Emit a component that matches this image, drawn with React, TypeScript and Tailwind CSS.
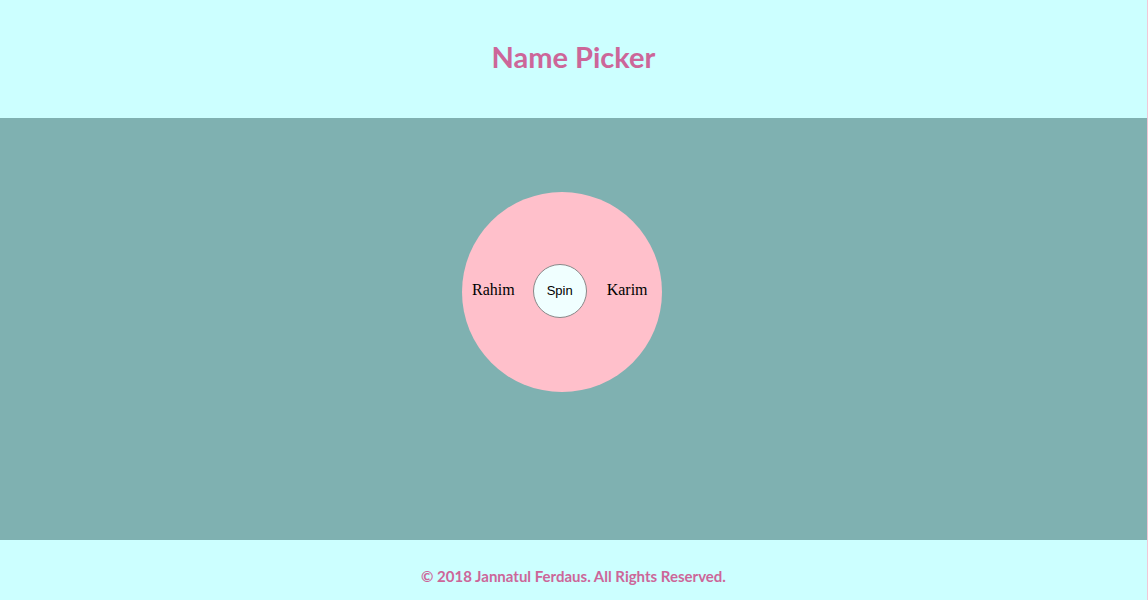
import React from 'react';

const names = ['Rahim', 'Karim'];

export default function App() {
  return (
    <div className="flex h-[600px] w-[1148px] flex-col bg-[#ccffff] border-r border-[#f2c6d6]">
      {/* Header */}
      <header className="flex h-[118px] items-center justify-center pb-[4px]">
        <h1 className="text-[29px] font-bold text-[#cc6699] [font-family:Lato,'Open_Sans',sans-serif]">Name Picker</h1>
      </header>

      {/* Wheel area */}
      <main className="h-[422px] bg-[#7fb1b1] pt-[74px] pl-[462px]">
        <div className="flex h-[200px] w-[200px] items-center rounded-full bg-[#ffc0cb] pl-[10px] pb-[2px] [font-family:'Liberation_Serif',serif]">
          <span className="mb-[2px] text-[16px] text-black">{names[0]}</span>
          <button className="ml-[18px] flex h-[54px] w-[54px] items-center justify-center rounded-full border border-[#888] bg-[#f0ffff] text-[13px] text-black [font-family:'Liberation_Sans',Arial,sans-serif]">
            Spin
          </button>
          <span className="mb-[2px] ml-[20px] text-[16px] text-black">{names[1]}</span>
        </div>
      </main>

      {/* Footer */}
      <footer className="flex flex-1 items-center justify-center pt-[12px]">
        <p className="text-[15px] font-bold text-[#cc6699] [font-family:Lato,'Open_Sans',sans-serif]">
          © 2018 Jannatul Ferdaus. All Rights Reserved.
        </p>
      </footer>
    </div>
  );
}
